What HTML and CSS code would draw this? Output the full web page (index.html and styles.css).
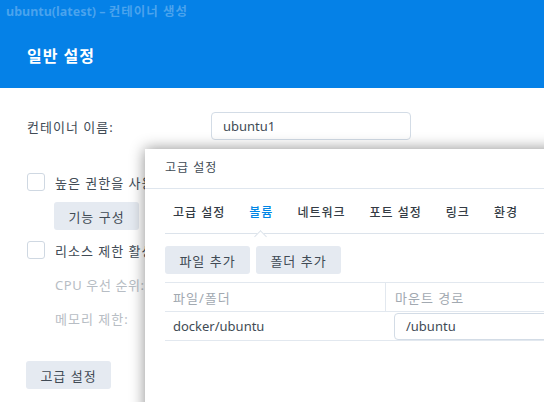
FILE: index.html
```html
<!DOCTYPE html>
<html lang="ko">
<head>
<meta charset="utf-8">
<link rel="stylesheet" href="styles.css">
</head>
<body>
<div class="page">
  <header class="head">
    <div class="win-title">ubuntu(latest) – <span class="ko">컨테이너 생성</span></div>
    <h1 class="step-title">일반 설정</h1>
  </header>
  <main class="content">
    <div class="form-row">
      <span class="label">컨테이너 이름:</span>
      <div class="input name-input">ubuntu1</div>
    </div>
    <div class="check-row first">
      <span class="checkbox"></span>
      <span class="check-label">높은 권한을 사용</span>
    </div>
    <div class="sub-row">
      <button class="btn">기능 구성</button>
    </div>
    <div class="check-row">
      <span class="checkbox"></span>
      <span class="check-label">리소스 제한 활성화</span>
    </div>
    <div class="sub-label cpu">CPU 우선 순위:</div>
    <div class="sub-label mem">메모리 제한:</div>
    <button class="btn adv">고급 설정</button>
  </main>

  <section class="dialog">
    <div class="dlg-title">고급 설정</div>
    <div class="dlg-body">
      <nav class="tabs">
        <span class="tab">고급 설정</span>
        <span class="tab active">볼륨</span>
        <span class="tab">네트워크</span>
        <span class="tab">포트 설정</span>
        <span class="tab">링크</span>
        <span class="tab">환경</span>
      </nav>
      <div class="toolbar">
        <button class="btn">파일 추가</button>
        <button class="btn">폴더 추가</button>
      </div>
      <div class="table">
        <div class="trow thead">
          <div class="cell c1">파일/폴더</div>
          <div class="cell c2">마운트 경로</div>
        </div>
        <div class="trow">
          <div class="cell c1 dark">docker/ubuntu</div>
          <div class="cell c2"><div class="input path-input">/ubuntu</div></div>
        </div>
      </div>
    </div>
  </section>
</div>
</body>
</html>
```
FILE: styles.css
```css
* { box-sizing: border-box; }
html, body { margin: 0; padding: 0; }
body {
  width: 544px;
  height: 402px;
  overflow: hidden;
  background: #fff;
  font-family: "Noto Sans", "Noto Sans CJK KR", sans-serif;
  color: #414b55;
  font-size: 13px;
}
.page { position: relative; width: 544px; height: 402px; overflow: hidden; }

.head {
  background: #0581e7;
  height: 88px;
  padding: 3px 6px 0;
}
.win-title {
  font-size: 12.5px;
  font-weight: 700;
  color: rgba(255,255,255,0.28);
  line-height: 18px;
  white-space: nowrap;
}
.win-title .ko { letter-spacing: 1px; }
.step-title {
  margin: 25px 0 0 21px;
  font-size: 16px;
  font-weight: 700;
  color: #fff;
  line-height: 20px;
  letter-spacing: 1px;
}

.content { padding: 24px 27px 0; }
.form-row { display: flex; align-items: center; height: 28px; }
.label { width: 184px; font-size: 13px; letter-spacing: 1px; }
.input {
  border: 1px solid #d3dce6;
  border-radius: 4px;
  height: 28px;
  display: flex;
  align-items: center;
  padding-left: 11px;
  font-size: 13px;
  color: #414b55;
  background: #fff;
}
.name-input { width: 200px; }

.check-row { display: flex; align-items: center; height: 18px; margin-top: 11px; }
.check-row.first { margin-top: 33px; }
.checkbox {
  width: 18px; height: 18px;
  border: 1px solid #cfd8e2;
  border-radius: 3px;
  background: #fff;
  margin-right: 10px;
  flex: none;
}
.check-label {
  font-size: 13px;
  white-space: nowrap;
  letter-spacing: 1px;
}
.sub-row { margin: 11px 0 0 27px; }

.btn {
  font-family: inherit;
  font-size: 13px;
  letter-spacing: 1px;
  color: #414b55;
  background: #e5eaf1;
  border: none;
  border-radius: 3px;
  height: 28px;
  width: 85px;
  padding: 0;
}
.sub-label {
  margin-left: 28px;
  color: #b7bdc4;
  font-size: 13px;
  line-height: 18px;
  letter-spacing: 0.6px;
  white-space: nowrap;
}
.sub-label.cpu { margin-top: 17px; }
.sub-label.mem { margin-top: 16px; letter-spacing: 1px; }
.btn.adv { margin: 33px 0 0 -1px; display: block; }

.dialog {
  position: absolute;
  left: 145px;
  top: 149px;
  width: 460px;
  height: 280px;
  background: #fff;
  box-shadow: 0 0 14px rgba(0,0,0,0.45);
}
.dlg-title {
  height: 40px;
  line-height: 38px;
  padding-left: 20px;
  font-size: 12px;
  letter-spacing: 1px;
  border-bottom: 1px solid #dfe6ee;
}
.dlg-body { padding: 0 0 0 20px; }
.tabs {
  display: flex;
  gap: 24px;
  height: 45px;
  align-items: center;
  padding: 1px 0 0 8px;
  border-bottom: 1px solid #dce3eb;
  position: relative;
}
.tab {
  font-size: 12px;
  font-weight: 500;
  letter-spacing: 1px;
  color: #333b44;
  position: relative;
  white-space: nowrap;
}
.tab.active { color: #0086e5; }
.tab.active::after {
  content: "";
  position: absolute;
  left: 50%;
  bottom: -20px;
  width: 8px;
  height: 8px;
  margin-left: -5px;
  background: #fff;
  border-top: 1px solid #dce3eb;
  border-left: 1px solid #dce3eb;
  transform: rotate(45deg);
}
.toolbar { display: flex; gap: 6px; margin-top: 12px; }

.table { margin-top: 8px; border-top: 1px solid #e2e8ef; }
.trow { display: flex; height: 29px; border-bottom: 1px solid #e2e8ef; }
.cell { display: flex; align-items: center; font-size: 13px; }
.c1 { width: 220px; flex: none; padding-left: 8px; }
.c2 { flex: 1; padding-left: 9px; }
.thead .cell { color: #a2a9b1; letter-spacing: 1px; }
.thead .c2 { border-left: 1px solid #e2e8ef; }
.dark { color: #414b55; }
.path-input { width: 200px; height: 27px; padding-left: 11px; }
```
